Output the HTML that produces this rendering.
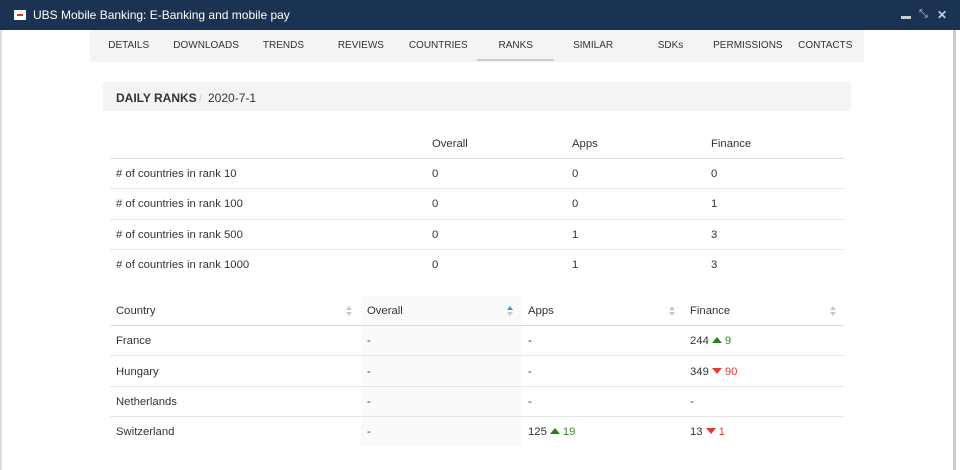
<!DOCTYPE html><html><head><style>
*{margin:0;padding:0;box-sizing:border-box}
body{width:960px;height:470px;overflow:hidden;background:#fff;font-family:"Liberation Sans",sans-serif;font-size:11.3px;color:#333;position:relative}
.tb{position:absolute;left:0;top:0;width:960px;height:30px;background:#1b3352;color:#fff;font-size:12px}
.tb .ic{position:absolute;left:14px;top:10px;width:12px;height:10px;background:#fff}
.tb .ic:after{content:"";position:absolute;left:3px;top:4px;width:6px;height:2px;background:#d33}
.tb .t{position:absolute;left:33px;top:8px}
.tabs{position:absolute;left:90px;top:30px;width:774px;height:32px;background:#f4f4f4}
.tab{position:absolute;top:10px;width:77.4px;text-align:center;font-size:10px;color:#333}
.ul{position:absolute;left:387px;top:29px;width:77px;height:2px;background:#ccc}
.dr{position:absolute;left:103px;top:82px;width:748px;height:29px;background:#f4f4f4;border-radius:3px;font-size:12px}
.dr b{position:absolute;left:13px;top:9px;color:#333}
.dr span{position:absolute;left:105px;top:9px}
.c{position:absolute;font-size:11.3px}
.ln{position:absolute;left:110px;width:734px;height:1px;background:#e6e6e6}
.g{color:#3a8a2a}.r{color:#e03b2e}
.up{display:inline-block;width:0;height:0;border-left:5px solid transparent;border-right:5px solid transparent;border-bottom:6px solid #2e7d1f;margin:0 3px 1px 3px}
.dn{display:inline-block;width:0;height:0;border-left:5px solid transparent;border-right:5px solid transparent;border-top:6px solid #e03b2e;margin:0 3px 1px 3px}
.so{position:absolute;width:6px}
.so i{display:block;width:0;height:0;border-left:3px solid transparent;border-right:3px solid transparent}
.so .a{border-bottom:4px solid #c8c8c8;margin-bottom:2px}
.so .b{border-top:4px solid #c8c8c8}
</style></head><body>
<div class="tb"><div class="ic"></div><div class="t">UBS Mobile Banking: E-Banking and mobile pay</div>
<div style="position:absolute;left:901px;top:16px;width:10px;height:3px;background:#c8ced6"></div>
<div style="position:absolute;left:919px;top:8px;color:#c8ced6;font-size:11px">⤡</div>
<div style="position:absolute;left:937px;top:8px;color:#c8ced6;font-size:12px;font-weight:bold">✕</div></div>
<div style="position:absolute;left:953px;top:30px;width:3px;height:440px;background:#ccc"></div>
<div style="position:absolute;left:0;top:30px;width:2px;height:440px;background:#ddd"></div>
<div class="tabs">
<div class="tab" style="left:0">DETAILS</div><div class="tab" style="left:77.4px">DOWNLOADS</div><div class="tab" style="left:154.8px">TRENDS</div><div class="tab" style="left:232.2px">REVIEWS</div><div class="tab" style="left:309.6px">COUNTRIES</div><div class="tab" style="left:387px">RANKS</div><div class="tab" style="left:464.4px">SIMILAR</div><div class="tab" style="left:541.8px">SDKs</div><div class="tab" style="left:619.2px">PERMISSIONS</div><div class="tab" style="left:696.6px">CONTACTS</div>
<div class="ul"></div></div>
<div class="dr"><b>DAILY RANKS</b><span style="left:96px;color:#ccc">/</span><span>2020-7-1</span></div>

<div class="c" style="left:432px;top:138px">Overall</div><div class="c" style="left:572px;top:138px">Apps</div><div class="c" style="left:711px;top:138px">Finance</div>
<div class="ln" style="top:158px;background:#ddd"></div>
<div class="c" style="left:116px;top:168px"># of countries in rank 10</div><div class="c" style="left:432px;top:168px">0</div><div class="c" style="left:572px;top:168px">0</div><div class="c" style="left:711px;top:168px">0</div>
<div class="ln" style="top:188px"></div>
<div class="c" style="left:116px;top:198px"># of countries in rank 100</div><div class="c" style="left:432px;top:198px">0</div><div class="c" style="left:572px;top:198px">0</div><div class="c" style="left:711px;top:198px">1</div>
<div class="ln" style="top:219px"></div>
<div class="c" style="left:116px;top:229px"># of countries in rank 500</div><div class="c" style="left:432px;top:229px">0</div><div class="c" style="left:572px;top:229px">1</div><div class="c" style="left:711px;top:229px">3</div>
<div class="ln" style="top:249px"></div>
<div class="c" style="left:116px;top:259px"># of countries in rank 1000</div><div class="c" style="left:432px;top:259px">0</div><div class="c" style="left:572px;top:259px">1</div><div class="c" style="left:711px;top:259px">3</div>

<div style="position:absolute;left:361px;top:296px;width:161px;height:150px;background:#fafafa"></div>
<div class="c" style="left:116px;top:305px">Country</div><div class="c" style="left:367px;top:305px">Overall</div><div class="c" style="left:528px;top:305px">Apps</div><div class="c" style="left:690px;top:305px">Finance</div>
<div class="so" style="left:346px;top:306px"><i class="a"></i><i class="b"></i></div>
<div class="so" style="left:507px;top:306px"><i class="a" style="border-bottom-color:#4a90e2"></i><i class="b"></i></div>
<div class="so" style="left:669px;top:306px"><i class="a"></i><i class="b"></i></div>
<div class="so" style="left:830px;top:306px"><i class="a"></i><i class="b"></i></div>
<div class="ln" style="top:325px;background:#ddd"></div>
<div class="c" style="left:116px;top:335px">France</div><div class="c" style="left:367px;top:335px">-</div><div class="c" style="left:528px;top:335px">-</div><div class="c" style="left:690px;top:335px">244<span class="up"></span><span class="g">9</span></div>
<div class="ln" style="top:355px"></div>
<div class="c" style="left:116px;top:366px">Hungary</div><div class="c" style="left:367px;top:366px">-</div><div class="c" style="left:528px;top:366px">-</div><div class="c" style="left:690px;top:366px">349<span class="dn"></span><span class="r">90</span></div>
<div class="ln" style="top:386px"></div>
<div class="c" style="left:116px;top:396px">Netherlands</div><div class="c" style="left:367px;top:396px">-</div><div class="c" style="left:528px;top:396px">-</div><div class="c" style="left:690px;top:396px">-</div>
<div class="ln" style="top:416px"></div>
<div class="c" style="left:116px;top:426px">Switzerland</div><div class="c" style="left:367px;top:426px">-</div><div class="c" style="left:528px;top:426px">125<span class="up"></span><span class="g">19</span></div><div class="c" style="left:690px;top:426px">13<span class="dn"></span><span class="r">1</span></div>
</body></html>
